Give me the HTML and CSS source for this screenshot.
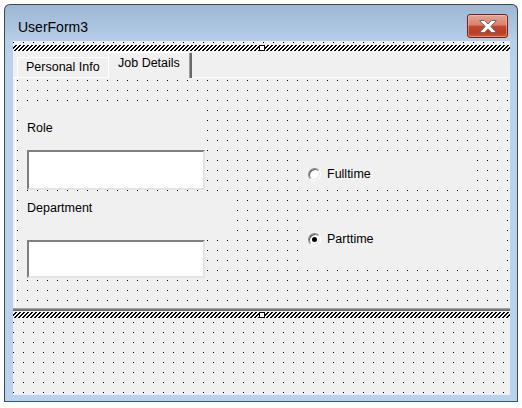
FILE: index.html
```html
<!DOCTYPE html>
<html>
<head>
<meta charset="utf-8">
<title>UserForm3</title>
<link rel="stylesheet" href="styles.css">
</head>
<body>
<div class="window">
  <div class="titlebar">
    <span class="title">UserForm3</span>
    <div class="close">
      <svg width="18" height="13" viewBox="0 0 18 13"><polygon points="0.5,0.5 5.5,0.5 9,4 12.5,0.5 17.5,0.5 11.8,6.5 17.5,12.5 12.5,12.5 9,9 5.5,12.5 0.5,12.5 6.2,6.5" fill="#fff" stroke="#6d6d6d" stroke-width="1"/></svg>
    </div>
  </div>
  <div class="client">
    <div class="form-top"></div>
    <div class="multipage">
      <div class="hatch">
        <svg class="hatch-svg" width="100%" height="6"><defs><pattern id="h1" width="4" height="4" patternUnits="userSpaceOnUse"><rect width="4" height="4" fill="#fff"/><rect x="2" y="0" width="2" height="1" fill="#000"/><rect x="1" y="1" width="2" height="1" fill="#000"/><rect x="0" y="2" width="2" height="1" fill="#000"/><rect x="0" y="3" width="1" height="1" fill="#000"/><rect x="3" y="3" width="1" height="1" fill="#000"/></pattern></defs><rect width="100%" height="6" fill="url(#h1)" shape-rendering="crispEdges"/></svg>
        <span class="handle"></span>
      </div>
      <div class="tabstrip">
        <div class="tab">Personal Info</div>
        <div class="tab active">Job Details</div>
      </div>
      <div class="page-frame">
        <div class="page">
          <div class="col-left">
            <div class="label role">Role</div>
            <div class="textbox"></div>
            <div class="label dept">Department</div>
            <div class="textbox short"></div>
          </div>
          <div class="col-right">
            <div class="option full"><span class="radio"></span><span>Fulltime</span></div>
            <div class="option part"><span class="radio on"></span><span>Parttime</span></div>
          </div>
        </div>
      </div>
      <div class="page-bottom"></div>
      <div class="hatch">
        <svg class="hatch-svg" width="100%" height="6"><defs><pattern id="h2" width="4" height="4" patternUnits="userSpaceOnUse"><rect width="4" height="4" fill="#fff"/><rect x="2" y="0" width="2" height="1" fill="#000"/><rect x="1" y="1" width="2" height="1" fill="#000"/><rect x="0" y="2" width="2" height="1" fill="#000"/><rect x="0" y="3" width="1" height="1" fill="#000"/><rect x="3" y="3" width="1" height="1" fill="#000"/></pattern></defs><rect width="100%" height="6" fill="url(#h2)" shape-rendering="crispEdges"/></svg>
        <span class="handle"></span>
      </div>
    </div>
    <div class="form-bottom"></div>
  </div>
</div>
</body>
</html>
```
FILE: styles.css
```css
* { box-sizing: border-box; }
html, body { margin: 0; padding: 0; background: #fff; }
body { font-family: "Liberation Sans", Arial, sans-serif; color: #000; }

.window {
  margin: 4px 0 0 4px;
  width: 514px;
  height: 398px;
  border: 1px solid #41474d;
  border-bottom-color: #2a5d7e;
  border-radius: 6px 6px 0 0;
  background: linear-gradient(180deg, #9db7d4 0px, #a9c2dd 18px, #b7cfe9 36px, #bad2eb 60px, #bad2eb 100%);
  display: flex;
  flex-direction: column;
  overflow: hidden;
}

.titlebar {
  flex: none;
  height: 36px;
  display: flex;
  align-items: flex-start;
  padding: 0 9px 0 13px;
}
.title {
  margin-top: 13px;
  font-size: 14px;
  line-height: 18px;
  color: #000;
}
.close {
  margin-left: auto;
  margin-top: 9px;
  width: 41px;
  height: 24px;
  border: 1px solid #6f2418;
  border-radius: 3px;
  background: linear-gradient(180deg, #e4a595 0%, #d8816d 45%, #c4472e 52%, #b93c24 80%, #cc5a3c 100%);
  box-shadow: inset 0 0 0 1px rgba(255, 210, 200, 0.45);
  display: flex;
  align-items: center;
  justify-content: center;
}
.close svg { display: block; }

.client {
  flex: 1;
  margin: 0 7px 6px 8px;
  background-color: #f0f0f0;
  background-image: conic-gradient(from 270deg at 1px 1px, #000 90deg, transparent 0);
  background-size: 10px 10px;
  background-position: 0 1px;
  overflow: hidden;
  display: flex;
  flex-direction: column;
}
.form-top { flex: none; height: 4px; }
.form-bottom { flex: 1; }

.multipage {
  flex: none;
  background: #f0f0f0;
  display: flex;
  flex-direction: column;
}

.hatch {
  position: relative;
  height: 6px;
  display: flex;
  justify-content: center;
}
.hatch-svg {
  position: absolute;
  left: 0;
  top: 0;
  display: block;
}
.handle {
  position: relative;
  width: 6px;
  height: 6px;
  background: #fff;
  border: 1px solid #000;
}

.tabstrip {
  height: 26px;
  display: flex;
  align-items: flex-end;
  padding-left: 4px;
  font-size: 12.5px;
  line-height: 15px;
}
.tab {
  width: 91px;
  height: 20px;
  border-top: 1px solid #fff;
  border-left: 1px solid #fff;
  border-radius: 2px 2px 0 0;
  padding-left: 8px;
  display: flex;
  align-items: center;
  white-space: nowrap;
}
.tab.active {
  position: relative;
  z-index: 1;
  width: 84px;
  height: 26px;
  margin-bottom: -1px;
  padding: 3px 0 0 9px;
  align-items: flex-start;
  background: #f0f0f0;
  border-right: 2px solid #696969;
  box-shadow: inset -1px 0 0 #a0a0a0;
}

.page-frame {
  border-top: 1px solid #fff;
  padding-left: 2px;
}
.page {
  height: 230px;
  border-left: 1px solid #fff;
  background-color: #f0f0f0;
  background-image: conic-gradient(from 270deg at 1px 1px, #000 90deg, transparent 0);
  background-size: 10px 10px;
  background-position: 1px 2px;
  display: flex;
  align-items: flex-start;
  font-size: 12.5px;
  line-height: 15px;
}
.page-bottom {
  height: 3px;
  background: linear-gradient(180deg, #a0a0a0 0 1px, #7d7d7d 1px 2px, #696969 2px 3px);
  margin-bottom: 1px;
}

.col-left {
  margin: 28px 0 0 4px;
  display: flex;
  flex-direction: column;
  align-items: flex-start;
}
.label {
  background: #f0f0f0;
  padding-left: 7px;
  white-space: nowrap;
}
.label.role { width: 184px; height: 41px; padding-top: 15px; }
.label.dept { width: 212px; height: 43px; padding-top: 7px; margin-top: 4px; }
.textbox {
  margin: 3px 0 0 7px;
  width: 178px;
  height: 40px;
  background: #fff;
  border: 2px solid;
  border-color: #7f7f7f #e3e3e3 #e3e3e3 #7f7f7f;
}
.textbox.short { height: 38px; }

.col-right {
  margin: 81px 0 0 68px;
  display: flex;
  flex-direction: column;
  align-items: flex-start;
}
.option {
  background: #f0f0f0;
  display: flex;
  align-items: center;
  padding-left: 8px;
  gap: 6px;
}
.option.full { width: 175px; height: 31px; }
.option.part { width: 205px; height: 44px; margin-top: 27px; }
.radio {
  flex: none;
  width: 13px;
  height: 13px;
  border-radius: 50%;
  border: 1px solid;
  border-color: #8a8a8a #ffffff #ffffff #8a8a8a;
  box-shadow: inset 1px 1px 0 #5a5a5a, inset -1px -1px 0 #e3e3e3;
  background: #fff;
  display: flex;
  align-items: center;
  justify-content: center;
}
.radio.on::after {
  content: "";
  width: 5px;
  height: 5px;
  border-radius: 50%;
  background: #000;
}
```
